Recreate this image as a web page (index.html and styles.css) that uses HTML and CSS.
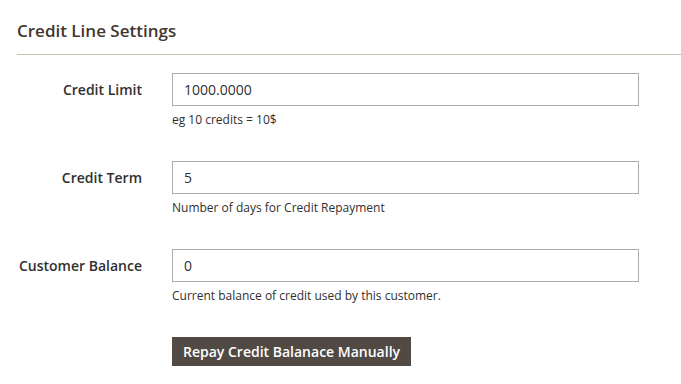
FILE: index.html
```html
<!DOCTYPE html>
<html lang="en">

<head>
    <meta charset="UTF-8">
    <meta name="viewport" content="width=device-width, initial-scale=1.0">
    <title>Credit Line Settings</title>
    <link rel="stylesheet" href="styles.css">
</head>

<body>
    <div class="fieldset-wrapper">
        <div class="fieldset-title">
            <strong>Credit Line Settings</strong>
        </div>

        <form class="credit-form">
            <div class="field">
                <label for="credit-limit">Credit Limit</label>
                <div class="field-control">
                    <input id="credit-limit" type="text" value="1000.0000">
                    <div class="field-note">eg 10 credits = 10$</div>
                </div>
            </div>

            <div class="field">
                <label for="credit-term">Credit Term</label>
                <div class="field-control">
                    <input id="credit-term" type="text" value="5">
                    <div class="field-note">Number of days for Credit Repayment</div>
                </div>
            </div>

            <div class="field">
                <label for="customer-balance">Customer Balance</label>
                <div class="field-control">
                    <input id="customer-balance" type="text" value="0">
                    <div class="field-note">Current balance of credit used by this customer.</div>
                </div>
            </div>

            <div class="field">
                <span class="label-spacer"></span>
                <div class="field-control">
                    <button type="button">Repay Credit Balanace Manually</button>
                </div>
            </div>
        </form>
    </div>
</body>

</html>
```

FILE: styles.css
```css
body {
    margin: 0;
    padding: 0 0 0 17px;
    background-color: #fff;
    color: #303030;
    font-family: "Open Sans", "Liberation Sans", sans-serif;
}

.fieldset-title {
    padding: 20px 0 12px;
    border-bottom: 1px solid #cac3b4;
}

.fieldset-title strong {
    font-size: 17px;
    font-weight: 600;
    color: #41362f;
    line-height: 22px;
}

.credit-form {
    display: flex;
    flex-direction: column;
    gap: 32px;
    padding-top: 18px;
}

.field {
    display: flex;
    gap: 30px;
}

.field label,
.label-spacer {
    width: 125px;
    flex-shrink: 0;
    text-align: right;
    font-size: 14px;
    font-weight: 600;
    line-height: 19px;
    padding-top: 7px;
}

.field-control {
    width: 467px;
}

.field-control input {
    display: block;
    box-sizing: border-box;
    width: 100%;
    height: 33px;
    padding: 0 11px;
    border: 1px solid #adadad;
    border-radius: 0;
    font-family: inherit;
    font-size: 14px;
    color: #303030;
}

.field-note {
    margin-top: 5px;
    font-size: 12px;
    line-height: 18px;
}

button {
    height: 29px;
    padding: 0 11px;
    background-color: #514943;
    color: #fff;
    border: none;
    border-radius: 0;
    font-family: inherit;
    font-size: 14px;
    font-weight: 600;
    cursor: pointer;
}
```
